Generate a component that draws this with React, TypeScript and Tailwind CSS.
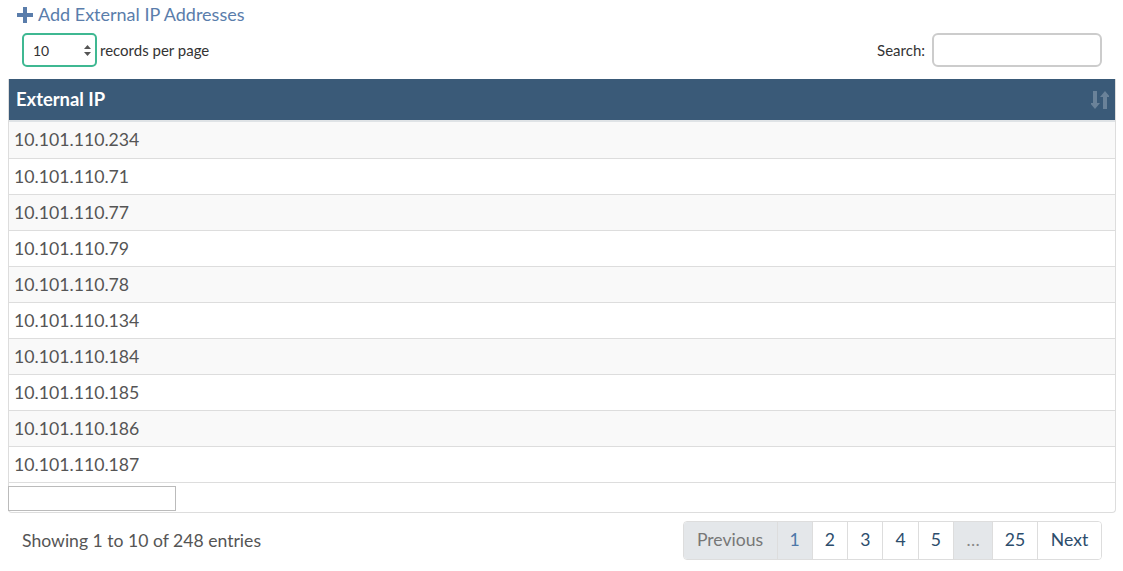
import React from 'react';

const ips = [
  '10.101.110.234',
  '10.101.110.71',
  '10.101.110.77',
  '10.101.110.79',
  '10.101.110.78',
  '10.101.110.134',
  '10.101.110.184',
  '10.101.110.185',
  '10.101.110.186',
  '10.101.110.187',
];

const pages = ['1', '2', '3', '4', '5', '…', '25'];

const App: React.FC = () => {
  return (
    <div className="w-[1123px] h-[571px] bg-white text-[#555] px-2" style={{ fontFamily: 'Lato, "Open Sans", sans-serif' }}>
      {/* Add link */}
      <div className="h-[28px] flex items-center pl-[9px] pt-[1px]">
        <a className="flex items-center gap-[5px] text-[18px] text-[#5a7dab] cursor-pointer">
          <svg width="16" height="16" viewBox="0 0 16 16" className="fill-[#5a7dab]">
            <path d="M6 0h4v6h6v4h-6v6H6v-6H0V6h6z" />
          </svg>
          Add External IP Addresses
        </a>
      </div>

      {/* Controls */}
      <div className="flex items-center justify-between h-[34px] mt-[5px] pl-[14px] pr-[13px]">
        <div className="flex items-center gap-[3px]">
          <div className="relative w-[75px] h-[34px] border-2 border-[#3fb892] rounded-[5px] flex items-center pl-[9px] text-[14px] text-[#333]">
            10
            <svg className="absolute right-[4px] top-[10px]" width="7" height="11" viewBox="0 0 7 11">
              <path d="M3.5 0L7 4H0z M3.5 11L0 7h7z" fill="#555" />
            </svg>
          </div>
          <span className="text-[15px] text-[#333]">records per page</span>
        </div>
        <div className="flex items-center gap-[7px]">
          <span className="text-[15px] text-[#333]">Search:</span>
          <input className="w-[170px] h-[34px] border-2 border-[#ccc] rounded-[6px] outline-none" />
        </div>
      </div>

      {/* Table */}
      <div className="mt-[12px] w-[1108px] border border-[#ddd] border-t-0 rounded-b-[4px]">
        <div className="h-[43px] bg-[#3a5a78] flex items-center justify-between pl-[7px] pr-[6px] border-b-2 border-[#dfe3e6]">
          <span className="text-white font-bold text-[18.4px]">External IP</span>
          <svg width="18" height="20" viewBox="0 0 18 20" className="fill-[#6a8299]">
            <path d="M2 1h4v12h3l-5 6-5-6h3z" />
            <path d="M12 19h4V7h3l-5-6-5 6h3z" />
          </svg>
        </div>
        {ips.map((ip, i) => (
          <div
            key={ip}
            className={`h-[36px] flex items-center pl-[5px] pt-[1px] text-[17.7px] text-[#555] ${i % 2 === 0 ? 'bg-[#f9f9f9]' : 'bg-white'} ${i > 0 ? 'border-t border-[#ddd]' : ''}`}
          >
            {ip}
          </div>
        ))}
        <div className="h-[30px] flex items-start pt-[3px] border-t border-[#ddd]">
          <div className="w-[168px] h-[25px] border border-[#bbb] -ml-px" />
        </div>
      </div>

      {/* Footer */}
      <div className="flex items-center justify-between mt-[8px] pl-[14px] pr-[13px]">
        <span className="text-[17.6px] text-[#555] pt-[1px]">Showing 1 to 10 of 248 entries</span>
        <div className="flex h-[39px] text-[17.6px] rounded-[4px] border border-[#ddd] overflow-hidden">
          <span className="w-[93px] flex items-center justify-center bg-[#e4e7ea] text-[#777]">Previous</span>
          {pages.map((p) => {
            const grey = p === '1' || p === '…';
            const w = p === '…' ? 'w-[39px]' : p === '25' ? 'w-[45px]' : 'w-[35.3px]';
            return (
              <span
                key={p}
                className={`${w} flex items-center justify-center border-l border-[#ddd] ${grey ? 'bg-[#e4e7ea]' : 'bg-white'} ${p === '1' ? 'text-[#4d77a8]' : p === '…' ? 'text-[#888]' : 'text-[#2d4d6c]'}`}
              >
                {p}
              </span>
            );
          })}
          <span className="w-[64px] flex items-center justify-center border-l border-[#ddd] bg-white text-[#2d4d6c]">Next</span>
        </div>
      </div>
    </div>
  );
};

export default App;
